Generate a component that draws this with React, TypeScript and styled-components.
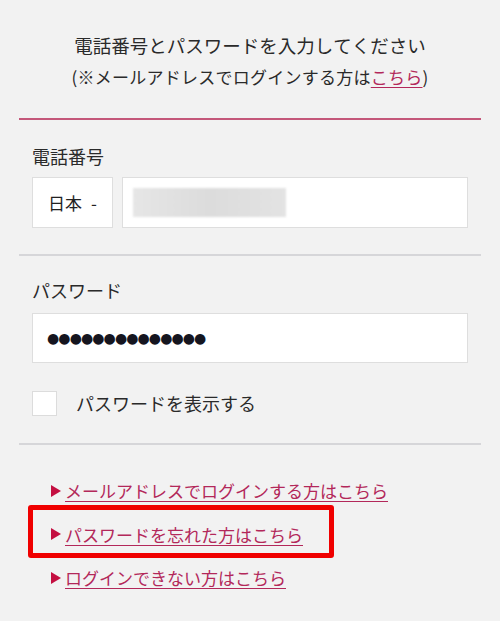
import React from "react";
import styled, { createGlobalStyle } from "styled-components";

const GlobalStyle = createGlobalStyle`
  html, body {
    margin: 0;
    padding: 0;
    background: #f2f2f2;
  }
  body {
    font-family: "Noto Sans CJK JP", "Noto Sans", sans-serif;
    font-kerning: none;
    color: #222;
  }
`;

const Page = styled.div`
  padding: 0 19px;
  min-height: 621px;
  box-sizing: border-box;
`;

const Intro = styled.div`
  padding: 30px 0 26px;
  text-align: center;
  line-height: 31px;
  color: #2a2a2a;
  border-bottom: 2px solid #c4577a;
`;

const IntroLine = styled.div<{ $size: number; $spacing?: number }>`
  font-size: ${({ $size }) => $size}px;
  letter-spacing: ${({ $spacing }) => $spacing || 0}px;
`;

const InlineLink = styled.a`
  color: #b3285a;
  text-decoration: underline;
  text-underline-offset: 3px;
`;

const Section = styled.div<{ $top: number; $bottom: number; $line?: boolean }>`
  padding: ${({ $top, $bottom }) => `${$top}px 13px ${$bottom}px`};
  border-bottom: ${({ $line }) => ($line ? "2px solid #d6d6d9" : "none")};
`;

const Label = styled.div`
  font-size: 18px;
  line-height: 26px;
  color: #2a2a2a;
`;

const FieldRow = styled.div<{ $gap: number }>`
  display: flex;
  gap: 9px;
  margin-top: ${({ $gap }) => $gap}px;
`;

const Box = styled.div<{ $width?: number; $height: number }>`
  box-sizing: border-box;
  ${({ $width }) => ($width ? `width: ${$width}px; flex: none;` : "flex: 1;")}
  height: ${({ $height }) => $height}px;
  background: #fff;
  border: 1px solid #dedede;
  display: flex;
  align-items: center;
`;

const CountryText = styled.span`
  padding-left: 15px;
  font-size: 17px;
  color: #222;
`;

const Caret = styled.span`
  margin-left: 9px;
`;

const Blurred = styled.div`
  margin-left: 10px;
  width: 153px;
  height: 29px;
  background: linear-gradient(90deg, #e6e6e6, #dcdcdc 50%, #e3e3e3);
  filter: blur(1px);
`;

const Dots = styled.span`
  padding-left: 14px;
  font-family: "DejaVu Sans", sans-serif;
  font-size: 14px;
  letter-spacing: -0.9px;
  color: #15151f;
`;

const CheckRow = styled.label`
  display: flex;
  align-items: center;
  gap: 19px;
  margin-top: 27px;
  font-size: 18px;
  color: #2a2a2a;
`;

const CheckBox = styled.span`
  width: 25px;
  height: 25px;
  box-sizing: border-box;
  background: #fff;
  border: 1px solid #dcdcdc;
`;

const LinkList = styled.ul`
  list-style: none;
  margin: 0;
  padding: 24px 0 0 32px;
`;

const LinkItem = styled.li<{ $marked?: boolean }>`
  position: relative;
  display: flex;
  align-items: center;
  height: 43.5px;
  font-size: 17px;

  &::after {
    content: "";
    display: ${({ $marked }) => ($marked ? "block" : "none")};
    position: absolute;
    left: -23px;
    top: -8px;
    width: 306px;
    height: 53px;
    box-sizing: border-box;
    border: 5px solid #f00000;
    border-radius: 3px;
  }
`;

const Arrow = styled.span`
  width: 0;
  height: 0;
  border-top: 6px solid transparent;
  border-bottom: 6px solid transparent;
  border-left: 10px solid #c40f41;
  margin-right: 4px;
`;

const TextLink = styled.a`
  color: #b3285a;
  text-decoration: underline;
  text-underline-offset: 3px;
`;

const links = [
  { text: "メールアドレスでログインする方はこちら" },
  { text: "パスワードを忘れた方はこちら", marked: true },
  { text: "ログインできない方はこちら" },
];

export default function App() {
  return (
    <>
      <GlobalStyle />
      <Page>
        <Intro>
          <IntroLine $size={18.5}>電話番号とパスワードを入力してください</IntroLine>
          <IntroLine $size={17} $spacing={0.25}>
            (※メールアドレスでログインする方は<InlineLink>こちら</InlineLink>)
          </IntroLine>
        </Intro>

        <Section $top={23} $bottom={26} $line>
          <Label>電話番号</Label>
          <FieldRow $gap={8}>
            <Box $width={81} $height={51}>
              <CountryText>
                日本<Caret>-</Caret>
              </CountryText>
            </Box>
            <Box $height={51}>
              <Blurred />
            </Box>
          </FieldRow>
        </Section>

        <Section $top={21} $bottom={27} $line>
          <Label>パスワード</Label>
          <FieldRow $gap={10}>
            <Box $height={50}>
              <Dots>●●●●●●●●●●●●●●</Dots>
            </Box>
          </FieldRow>
          <CheckRow>
            <CheckBox />
            パスワードを表示する
          </CheckRow>
        </Section>

        <LinkList>
          {links.map((l) => (
            <LinkItem key={l.text} $marked={l.marked}>
              <Arrow />
              <TextLink>{l.text}</TextLink>
            </LinkItem>
          ))}
        </LinkList>
      </Page>
    </>
  );
}
